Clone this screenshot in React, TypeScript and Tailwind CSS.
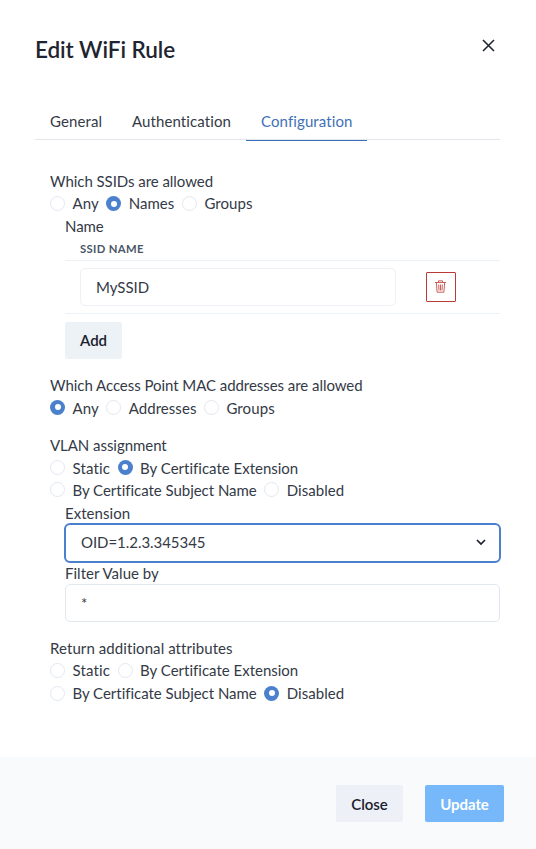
import React from 'react';

function Radio({ on, label, nudge = '', tracking = 'tracking-[0.05px]' }: { on?: boolean; label: string; nudge?: string; tracking?: string }) {
  return (
    <label className="flex h-[22.5px] items-center">
      <span
        className={`flex size-[15px] shrink-0 items-center justify-center rounded-full ${on ? 'bg-[#4a80cc]' : 'border border-[#e2e8f0] bg-white'}`}
      >
        {on && <span className="size-[6px] rounded-full bg-white" />}
      </span>
      <span className={`ml-[7.5px] ${nudge} ${tracking}`}>{label}</span>
    </label>
  );
}

export default function App() {
  return (
    <div className="flex h-[849px] w-[536px] flex-col bg-white font-['Lato',sans-serif] text-[15px] leading-[22.5px] font-normal tracking-[-0.05px] text-[#343a46] [font-variant-ligatures:no-common-ligatures]">
      <header className="flex h-[100px] items-start justify-between pt-[34px] pr-[41px] pl-[35px]">
        <h1 className="text-[22.5px] leading-[32px] font-semibold tracking-[-0.06px] text-[#1e2430]">Edit WiFi Rule</h1>
        <svg className="mt-[5px]" width="13" height="13" viewBox="0 0 13 13" fill="none" stroke="#1a202c" strokeWidth="1.5">
          <path d="M1 1l11 11M12 1L1 12" />
        </svg>
      </header>
      <main className="flex h-[657px] flex-col px-[35px]">
        <nav className="flex h-[40px] w-[465px] border-b border-[#e2e5e9] tracking-[0.1px]">
          <span className="w-[82px] px-[15px] pt-[10px]">General</span>
          <span className="w-[129px] px-[15px] pt-[10px]">Authentication</span>
          <span className="h-[41px] w-[121px] border-b border-[#3a70b8] px-[15px] pt-[10px] text-[#4271b7]">Configuration</span>
        </nav>
        <section className="mt-[30px] pl-[15px]">
          <div>Which SSIDs are allowed</div>
          <div className="flex gap-[7.5px]">
            <Radio label="Any" nudge="-mt-[1.5px]" />
            <Radio label="Names" on nudge="-mt-[1.5px]" />
            <Radio label="Groups" nudge="-mt-[1.5px]" />
          </div>
          <div className="ml-[15px] w-[435px]">
            <div>Name</div>
            <div className="h-[23px] border-b border-[#edf2f7] pl-[15px] text-[11.25px] font-bold tracking-[0.35px] text-[#4a5568]">SSID NAME</div>
            <div className="flex h-[53px] items-center border-b border-[#edf2f7] pl-[15px]">
              <div className="flex h-[38px] w-[316px] items-center rounded-[5px] border border-[#edf0f5] pt-px pl-[15px]">MySSID</div>
              <div className="ml-[30px] flex h-[30px] w-[30px] items-center justify-center rounded-[1px] border border-[#b93a36] pr-px">
                <svg width="11" height="13" viewBox="0 0 11 13" fill="none" stroke="#c95f5b" strokeWidth="1">
                  <path d="M0 2.5h11M3.5 2V.8h4V2M1.4 3l.7 9.2h6.8L9.6 3M3.7 4.5l.3 6M5.5 4.5v6M7.3 4.5l-.3 6" />
                </svg>
              </div>
            </div>
            <button className="mt-[8px] block h-[37px] w-[57px] rounded-[2px] bg-[#edf2f7] font-semibold text-[#1a202c]">Add</button>
          </div>
        </section>
        <section className="mt-[15px] pl-[15px]">
          <div>Which Access Point MAC addresses are allowed</div>
          <div className="flex gap-[7.5px]">
            <Radio label="Any" on nudge="mt-[1.5px]" />
            <Radio label="Addresses" nudge="mt-[1.5px]" />
            <Radio label="Groups" nudge="mt-[1.5px]" tracking="tracking-[0.1px]" />
          </div>
        </section>
        <section className="mt-[15px] pl-[15px]">
          <div>VLAN assignment</div>
          <div className="flex gap-[7.5px]">
            <Radio label="Static" nudge="mt-[1.5px]" tracking="tracking-[0.15px]" />
            <Radio label="By Certificate Extension" on nudge="mt-[1.5px]" tracking="tracking-normal" />
          </div>
          <div className="flex gap-[7.5px]">
            <Radio label="By Certificate Subject Name" tracking="tracking-[-0.03px]" />
            <Radio label="Disabled" />
          </div>
          <div className="ml-[15px]">
            <div className="h-[22.5px] pt-[0.75px] tracking-[0.05px]">Extension</div>
            <div className="-mt-px -ml-px flex h-[40px] w-[437px] items-center justify-between rounded-[6px] border-2 border-[#4a80cc] pr-[13px] pl-[15px]">
              OID=1.2.3.345345
              <svg width="10" height="7" viewBox="0 0 10 7" fill="none" stroke="#1a202c" strokeWidth="1.7">
                <path d="M1 1l4 4 4-4" />
              </svg>
            </div>
            <div className="-mt-px tracking-[0.03px]">Filter Value by</div>
            <div className="flex h-[38px] w-[435px] items-center rounded-[5px] border border-[#e2e8f0] pl-[15px]">*</div>
          </div>
        </section>
        <section className="mt-[15px] pl-[15px]">
          <div className="tracking-[0.08px]">Return additional attributes</div>
          <div className="flex gap-[7.5px]">
            <Radio label="Static" nudge="-mt-[1.5px]" tracking="tracking-[0.15px]" />
            <Radio label="By Certificate Extension" nudge="-mt-[1.5px]" tracking="tracking-normal" />
          </div>
          <div className="flex gap-[7.5px]">
            <Radio label="By Certificate Subject Name" tracking="tracking-[-0.03px]" />
            <Radio label="Disabled" on />
          </div>
        </section>
      </main>
      <footer className="flex h-[92px] items-start justify-end gap-[22px] bg-[#f8fafc] pt-[28px] pr-[32px]">
        <button className="h-[37px] w-[67px] rounded-[2px] bg-[#edf0f6] pt-px font-semibold text-[#1a202c]">Close</button>
        <button className="h-[37px] w-[79px] rounded-[2px] bg-[#76b8fa] pt-px font-bold text-white">Update</button>
      </footer>
    </div>
  );
}
